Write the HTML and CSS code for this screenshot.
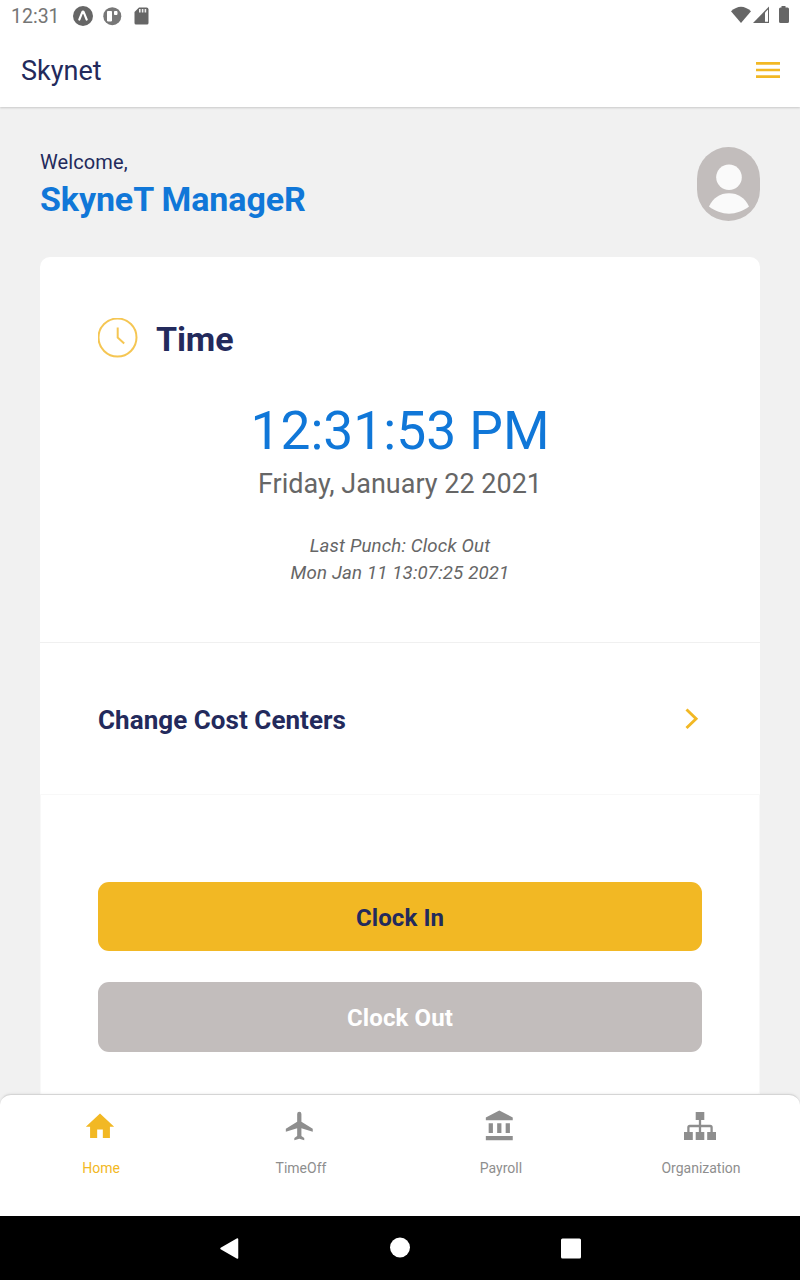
FILE: index.html
```html
<!DOCTYPE html>
<html lang="en">
<head>
    <meta charset="UTF-8">
    <meta name="viewport" content="width=device-width, initial-scale=1.0">
    <title>Skynet</title>
    <link rel="stylesheet" href="styles.css">
</head>
<body>
    <div class="screen">
        <header class="header">
            <div class="status-bar">
                <span class="status-time">12:31</span>
                <svg class="status-left" width="78" height="22" viewBox="0 0 78 22">
                    <circle cx="10" cy="11" r="10" fill="#666"/>
                    <path d="M6.3 14.6L9.2 7.4q.8-1.4 1.6 0l2.9 7.2" fill="none" stroke="#fff" stroke-width="2.2" stroke-linecap="round"/>
                    <circle cx="39.3" cy="11.2" r="9" fill="#777"/>
                    <path d="M34.5 6.500h4v9.500h-4z" fill="#fff" stroke="#fff" stroke-linejoin="round"/>
                    <path d="M41.500 6.500h2.500v3h-2.500z" fill="#fff" stroke="#fff" stroke-linejoin="round"/>
                    <path d="M66 2.5h7.5q2 0 2 2V18q0 1.5-1.5 1.5H63q-1.5 0-1.5-1.5V7z" fill="#666"/>
                    <path d="M66.8 4v3.500M69.6 4v3.500M72.4 4v3.500" stroke="#eee" stroke-width="1.600"/>
                </svg>
                <svg class="status-right" width="60" height="20" viewBox="0 0 60 20">
                    <path d="M11 18L1 6.3Q11-3 21 6.3z" fill="#666"/>
                    <path d="M39 1.5V18H23z" fill="#666"/>
                    <path d="M35 7.500L38 4.500V16.800H35z" fill="#fff"/>
                    <path d="M51.500 1h4v1.500h2q1.500 0 1.500 1.500v12.500q0 1.500-1.500 1.500h-7q-1.500 0-1.500-1.500V4q0-1.500 1.500-1.500h1z" fill="#666"/>
                </svg>
            </div>
            <div class="app-bar">
                <span class="app-title">Skynet</span>
                <svg width="24" height="16" viewBox="0 0 24 16">
                    <path d="M0 1.400h24M0 8h24M0 14.600h24" stroke="#f2b824" stroke-width="2.700"/>
                </svg>
            </div>
        </header>

        <main class="content">
            <div class="welcome">
                <div class="welcome-text">
                    <div class="hello">Welcome,</div>
                    <div class="name">SkyneT ManageR</div>
                </div>
                <svg class="avatar" width="63" height="74" viewBox="0 0 63 74">
                    <rect width="63" height="74" rx="31.500" fill="#c2bdbc"/>
                    <circle cx="32" cy="30.300" r="12.800" fill="#fafafa"/>
                    <path d="M12 59.500C16 51 23 46.300 32 46.300s16 4.700 20 13.200C40 69 24 69 12 59.500z" fill="#fafafa"/>
                </svg>
            </div>

            <div class="card">
                <section class="time">
                    <div class="time-head">
                        <svg width="40" height="40" viewBox="0 0 40 40" fill="none" stroke="#f5c653">
                            <circle cx="19.500" cy="19.500" r="19" stroke-width="2"/>
                            <path d="M19.700 9.500v10l6.500 6" stroke-width="2"/>
                        </svg>
                        <h2>Time</h2>
                    </div>
                    <div class="clock">12:31:53 PM</div>
                    <div class="date">Friday, January 22 2021</div>
                    <div class="punch">Last Punch: Clock Out<br>Mon Jan 11 13:07:25 2021</div>
                </section>
                <section class="cost-centers">
                    <h3>Change Cost Centers</h3>
                    <svg width="14" height="22" viewBox="0 0 14 22">
                        <path d="M1.500 1.500l9.600 9.200L1.500 20" fill="none" stroke="#f2b824" stroke-width="2.900"/>
                    </svg>
                </section>
                <section class="actions">
                    <button class="btn btn-in">Clock In</button>
                    <button class="btn btn-out">Clock Out</button>
                </section>
            </div>
        </main>

        <nav class="tabs">
            <a class="tab active">
                <svg width="34" height="34" viewBox="0 0 24 24"><path d="M10 20.500v-6h4v6h5v-8h3L12 3.200 2 12.500h3v8z"/></svg>
                <span>Home</span>
            </a>
            <a class="tab">
                <svg width="34" height="34" viewBox="0 0 24 24"><path d="M21 16v-2l-8-5V3.500a1.500 1.500 0 0 0-3 0V9l-8 5v2l8-2.500V19l-2 1.500V22l3.500-1 3.500 1v-1.500L13 19v-5.500z"/></svg>
                <span>TimeOff</span>
            </a>
            <a class="tab">
                <svg width="34" height="34" viewBox="0 0 24 24"><path d="M11.500 1L2 6v2h19V6zM16 10v7h3v-7zM2 22h19v-3H2zM10 10v7h3v-7zM4 10v7h3v-7z"/></svg>
                <span>Payroll</span>
            </a>
            <a class="tab">
                <svg width="34" height="34" viewBox="0 0 34 34">
                    <path d="M12.700 3h8.600v8h-8.600zM1 23h8.800v8H1zM12.700 23h8.600v8h-8.600zM24.200 23H33v8h-8.800z"/>
                    <path d="M17 10v14M5.400 24v-5.500q0-1.500 1.500-1.500h20.200q1.500 0 1.500 1.500V24" fill="none" stroke="#8e8e8e" stroke-width="2.300"/>
                </svg>
                <span>Organization</span>
            </a>
        </nav>

        <div class="system-nav">
            <svg width="20" height="22" viewBox="0 0 20 22"><path d="M18.500 2v19L2 11.500z" fill="#fff" stroke="#fff" stroke-width="1.500" stroke-linejoin="round"/></svg>
            <svg width="20" height="22" viewBox="0 0 20 22"><circle cx="10" cy="10.500" r="10" fill="#fff"/></svg>
            <svg width="20" height="22" viewBox="0 0 20 22"><rect y="1.500" width="20" height="20" rx="1.500" fill="#fff"/></svg>
        </div>
    </div>
</body>
</html>
```

FILE: styles.css
```css
* {
    box-sizing: border-box;
}
body {
    margin: 0;
    font-family: Roboto, sans-serif;
    background: #f1f1f1;
}
h2, h3 {
    margin: 0;
    color: #232a5c;
}
svg {
    display: block;
    flex: none;
}
.screen {
    display: flex;
    flex-direction: column;
    width: 800px;
    height: 1280px;
    overflow: hidden;
}
.header {
    height: 107px;
    flex: none;
    background: #fff;
    box-shadow: 0 1px 2px rgba(0, 0, 0, 0.17);
    z-index: 1;
}
.status-bar {
    display: flex;
    align-items: center;
    height: 32px;
    padding: 0 10px 0 11px;
}
.status-time {
    width: 62px;
    padding-top: 1px;
    font-size: 19.5px;
    color: #757575;
    white-space: nowrap;
}
.status-right {
    margin-left: auto;
    margin-top: -3px;
}
.app-bar {
    display: flex;
    align-items: center;
    justify-content: space-between;
    height: 75px;
    padding: 0 20px 0 21px;
}
.app-title {
    padding-top: 2px;
    font-size: 27px;
    color: #232a5c;
}
.content {
    height: 997px;
    flex: none;
    padding: 40px 40px 0;
    overflow: hidden;
}
.welcome {
    display: flex;
    justify-content: space-between;
    height: 110px;
}
.hello {
    margin-top: 3px;
    font-size: 20px;
    line-height: 24px;
    letter-spacing: 0.1px;
    color: #232a5c;
}
.name {
    margin-top: 5px;
    font-size: 34px;
    font-weight: 700;
    line-height: 40px;
    letter-spacing: -0.1px;
    color: #1077d8;
}
.card {
    border-radius: 10px 10px 0 0;
    background: #fff;
}
.time {
    height: 386px;
    padding: 60px 58px 0;
    border-bottom: 1px solid #f0f0f0;
    text-align: center;
}
.time-head {
    display: flex;
    align-items: center;
    gap: 18px;
    height: 42px;
}
.time-head h2 {
    padding-top: 2px;
    font-size: 34px;
    line-height: 42px;
    letter-spacing: -0.1px;
}
.clock {
    margin-top: 39px;
    font-size: 53.33px;
    line-height: 66px;
    color: #1077d8;
}
.date {
    margin-top: 3px;
    font-size: 27px;
    line-height: 34px;
    color: #666;
}
.punch {
    margin-top: 32px;
    font-size: 18.67px;
    font-style: italic;
    letter-spacing: 0.15px;
    line-height: 27px;
    color: #666;
}
.cost-centers {
    display: flex;
    align-items: center;
    justify-content: space-between;
    height: 151px;
    padding: 0 61px 0 58px;
}
.cost-centers h3 {
    margin-top: 3px;
    font-size: 26px;
    letter-spacing: 0.05px;
}
.actions {
    display: flex;
    flex-direction: column;
    gap: 31px;
    height: 308px;
    padding: 87px 57px 0;
    border: 1px solid #f8f8f8;
    border-radius: 0 0 10px 10px;
}
.btn {
    height: 69px;
    padding: 2px 0 0;
    border: none;
    border-radius: 11px;
    font-family: inherit;
    font-size: 24px;
    font-weight: 700;
    letter-spacing: 0.1px;
}
.btn-in {
    background: #f2b824;
    color: #232a5c;
}
.btn-out {
    height: 70px;
    background: #c2bdbc;
    color: #fff;
}
.tabs {
    display: flex;
    flex: none;
    height: 122px;
    margin-top: -10px;
    border-top: 1px solid #d5d5d5;
    border-radius: 11px 11px 0 0;
    background: #fff;
    box-shadow: 0 0 3px rgba(0, 0, 0, 0.1);
    z-index: 1;
}
.tab {
    display: flex;
    flex: 1;
    flex-direction: column;
    align-items: center;
    padding-top: 14px;
    font-size: 14px;
    color: #8e8e8e;
    fill: #8e8e8e;
}
.tab span {
    margin: 16px 0 0 2px;
    line-height: 18px;
}
.tab.active {
    color: #f2b824;
    fill: #f2b824;
}
.system-nav {
    display: flex;
    flex: none;
    align-items: center;
    justify-content: center;
    gap: 151px;
    height: 64px;
    padding-right: 1px;
    background: #000;
    z-index: 1;
}
```
